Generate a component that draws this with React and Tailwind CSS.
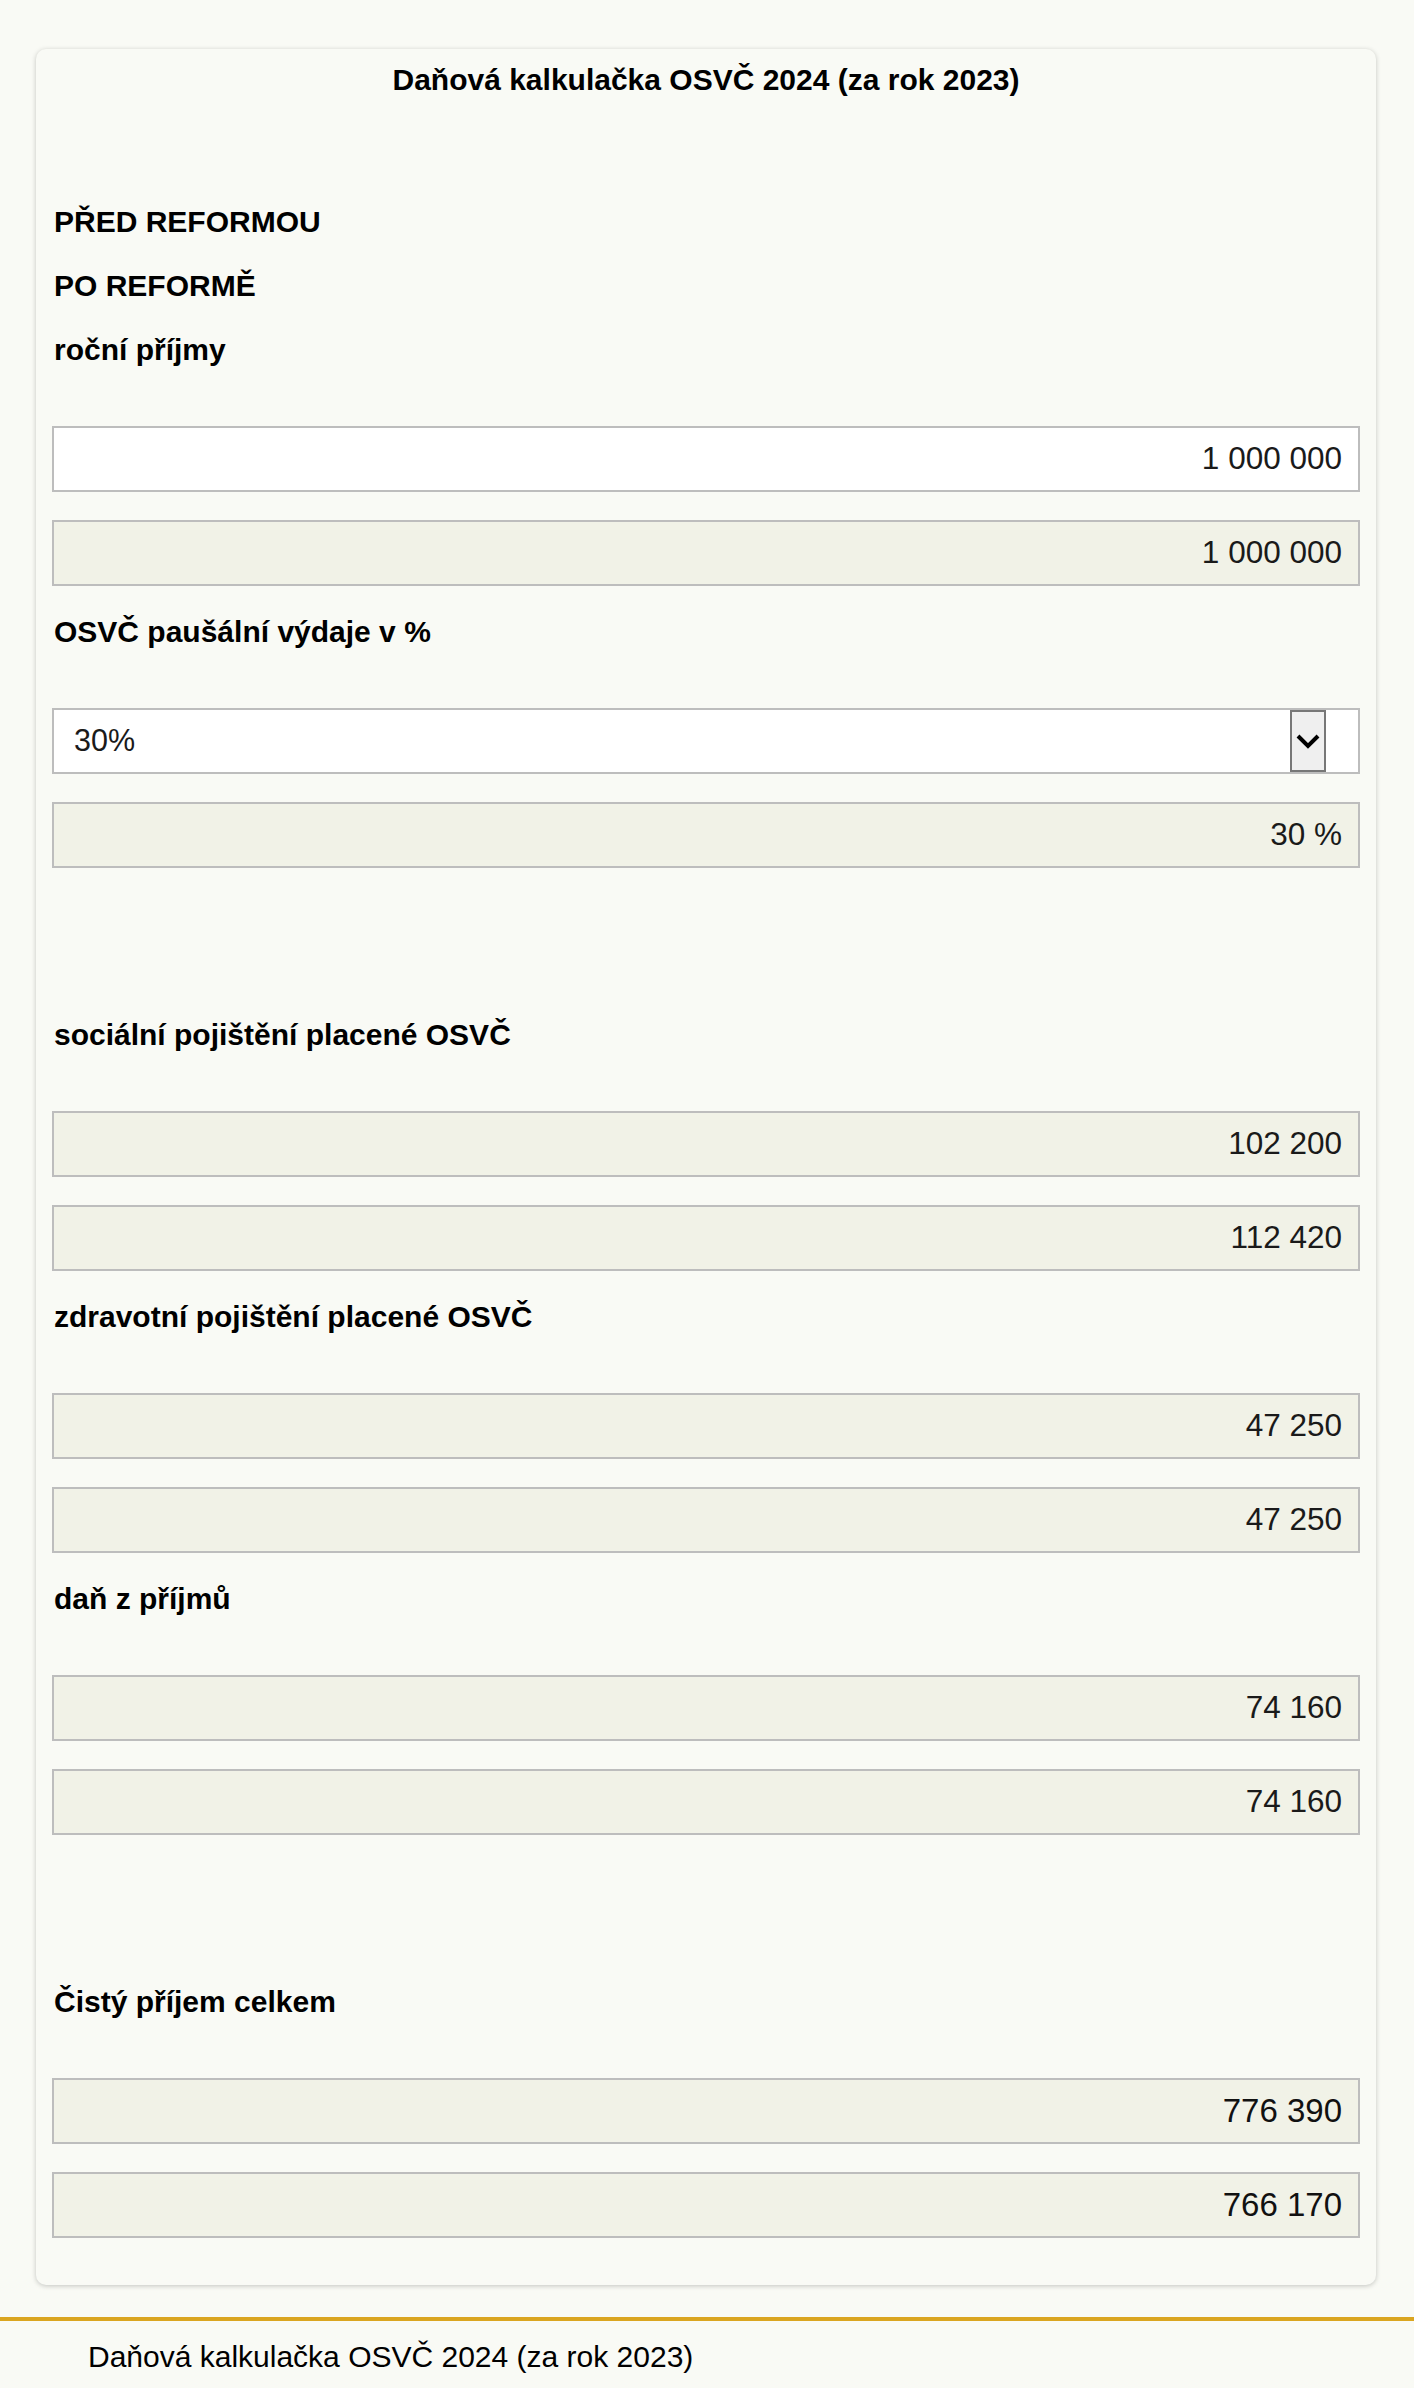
import React from 'react';

const font = { fontFamily: '"Liberation Sans", Arial, sans-serif' };

function Label({ children, className = "" }) {
    return (
        <div className={"pl-[2px] text-[30px] leading-[36px] font-bold text-black " + className}>{children}</div>
    );
}

function ValueBox({ value, white, big }) {
    const bg = white ? "bg-white" : "bg-[#f1f2e7]";
    const text = big ? "text-[33px] text-[#111111]" : "text-[31.5px] text-[#1a1a1a]";
    return (
        <div className={"h-[66px] border-2 border-[#bdbdbd] flex items-center justify-end pr-[16px] " + bg + " " + text}>
            {value}
        </div>
    );
}

function SelectBox({ value }) {
    return (
        <div className="h-[66px] border-2 border-[#bdbdbd] bg-white flex items-stretch text-[30.5px] text-[#1a1a1a]">
            <div className="flex items-center pl-[20px]">{value}</div>
            <div className="ml-auto mr-[32px] w-[36px] border-2 border-[#777777] bg-[#efefef] flex items-center justify-center">
                <svg width="24" height="16" viewBox="0 0 24 16">
                    <polyline points="2,3 12,13 22,3" fill="none" stroke="#000" strokeWidth="4" />
                </svg>
            </div>
        </div>
    );
}

function Section({ label, spaced, children }) {
    return (
        <div className={spaced ? "mt-[149px]" : "mt-[28px]"}>
            <Label>{label}</Label>
            <div className="mt-[58px] flex flex-col gap-[28px]">{children}</div>
        </div>
    );
}

function App() {
    return (
        <div className="min-h-screen bg-[#f9faf5] pt-[49px]" style={font}>
            <div className="ml-[36px] w-[1340px] rounded-[10px] bg-[#f9faf5] shadow-[0_1px_5px_rgba(0,0,0,0.22)] px-[16px] pt-[13px] pb-[47px]">
                <div className="text-center text-[30px] leading-[36px] font-bold text-black">
                    Daňová kalkulačka OSVČ 2024 (za rok 2023)
                </div>
                <Label className="mt-[106px]">PŘED REFORMOU</Label>
                <Label className="mt-[28px]">PO REFORMĚ</Label>

                <Section label="roční příjmy">
                    <ValueBox value="1 000 000" white />
                    <ValueBox value="1 000 000" />
                </Section>

                <Section label="OSVČ paušální výdaje v %">
                    <SelectBox value="30%" />
                    <ValueBox value="30 %" />
                </Section>

                <Section label="sociální pojištění placené OSVČ" spaced>
                    <ValueBox value="102 200" />
                    <ValueBox value="112 420" />
                </Section>

                <Section label="zdravotní pojištění placené OSVČ">
                    <ValueBox value="47 250" />
                    <ValueBox value="47 250" />
                </Section>

                <Section label="daň z příjmů">
                    <ValueBox value="74 160" />
                    <ValueBox value="74 160" />
                </Section>

                <Section label="Čistý příjem celkem" spaced>
                    <ValueBox value="776 390" big />
                    <ValueBox value="766 170" big />
                </Section>
            </div>

            <div className="mt-[32px] h-[4px] bg-[#daa520]"></div>
            <div className="pl-[88px] pt-[18px] pb-[15px] text-[30px] leading-[36px] text-black">
                Daňová kalkulačka OSVČ 2024 (za rok 2023)
            </div>
        </div>
    );
}

export default App;
